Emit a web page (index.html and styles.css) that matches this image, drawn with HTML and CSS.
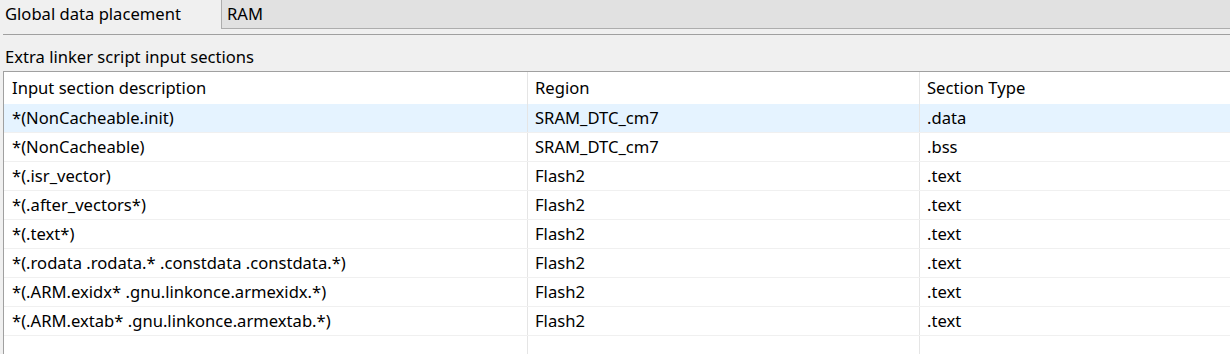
FILE: index.html
```html
<!DOCTYPE html>
<html lang="en">
<head>
  <title>Linker settings</title>
  <link rel="stylesheet" href="styles.css">
</head>
<body>

  <div class="placementRow">
    <span class="placementLabel">Global data placement</span>
    <div class="combo">RAM</div>
  </div>
  <div class="separator"></div>

  <div class="sectionTitle">Extra linker script input sections</div>

  <div class="tableBox">
    <table class="sectionTable">
      <thead>
        <tr>
          <th class="colDesc">Input section description</th>
          <th class="colRegion">Region</th>
          <th class="colType">Section Type</th>
        </tr>
      </thead>
      <tbody>
        <tr class="selected">
          <td>*(NonCacheable.init)</td>
          <td>SRAM_DTC_cm7</td>
          <td>.data</td>
        </tr>
        <tr>
          <td>*(NonCacheable)</td>
          <td>SRAM_DTC_cm7</td>
          <td>.bss</td>
        </tr>
        <tr>
          <td>*(.isr_vector)</td>
          <td>Flash2</td>
          <td>.text</td>
        </tr>
        <tr>
          <td>*(.after_vectors*)</td>
          <td>Flash2</td>
          <td>.text</td>
        </tr>
        <tr>
          <td>*(.text*)</td>
          <td>Flash2</td>
          <td>.text</td>
        </tr>
        <tr>
          <td>*(.rodata .rodata.* .constdata .constdata.*)</td>
          <td>Flash2</td>
          <td>.text</td>
        </tr>
        <tr>
          <td>*(.ARM.exidx* .gnu.linkonce.armexidx.*)</td>
          <td>Flash2</td>
          <td>.text</td>
        </tr>
        <tr>
          <td>*(.ARM.extab* .gnu.linkonce.armextab.*)</td>
          <td>Flash2</td>
          <td>.text</td>
        </tr>
        <tr class="filler">
          <td></td>
          <td></td>
          <td></td>
        </tr>
      </tbody>
    </table>
  </div>

</body>
</html>
```

FILE: styles.css
```css
body {
  margin: 0;
  background-color: #f0f0f0;
  color: #000000;
  font-family: "Noto Sans", "Open Sans", sans-serif;
  font-size: 16.6px;
  overflow: hidden;
}

.placementRow {
  display: flex;
  align-items: stretch;
  height: 29px;
}

.placementLabel {
  width: 216px;
  padding-left: 5px;
  line-height: 27px;
}

.combo {
  flex: 1;
  background-color: #e1e1e1;
  border-left: 1px solid #adadad;
  border-bottom: 1px solid #adadad;
  padding-left: 5px;
  line-height: 27px;
}

.separator {
  margin-top: 5px;
  margin-left: 3px;
  border-top: 1px solid #a0a0a0;
}

.sectionTitle {
  padding-left: 5px;
  margin-top: 8px;
  line-height: 27px;
  height: 28px;
}

.tableBox {
  margin-left: 3px;
  border-top: 1px solid #a0a0a0;
  border-left: 1px solid #a0a0a0;
  background-color: #ffffff;
}

.sectionTable {
  border-collapse: collapse;
  table-layout: fixed;
  width: 100%;
}

.sectionTable th,
.sectionTable td {
  text-align: left;
  font-weight: normal;
  padding: 0 0 0 7px;
  white-space: nowrap;
  overflow: hidden;
  border-left: 1px solid #e5e5e5;
}

.sectionTable th:first-child,
.sectionTable td:first-child {
  border-left: none;
  padding-left: 8px;
}

.sectionTable th {
  height: 32px;
  line-height: 32px;
}

.sectionTable td {
  height: 28px;
  line-height: 28px;
  border-bottom: 1px solid #f0f0f0;
}

.colDesc {
  width: 515px;
}

.colRegion {
  width: 384px;
}

.sectionTable tr.selected td {
  background-color: #e5f3ff;
}

.sectionTable tr.filler td {
  height: 30px;
  border-bottom: none;
}
```
